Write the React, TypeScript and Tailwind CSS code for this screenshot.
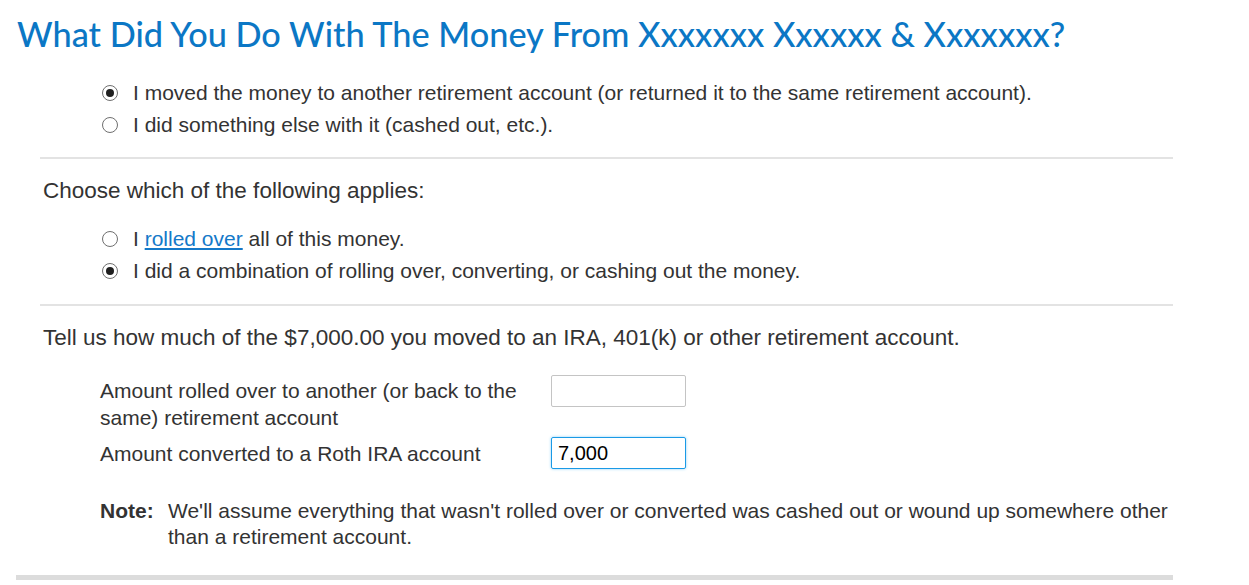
import React, { useState } from 'react';

const body = { fontFamily: '"Liberation Sans", Arial, sans-serif' };
const heading = { fontFamily: 'Lato, "Open Sans", sans-serif' };

const Radio: React.FC<{ checked: boolean; onClick: () => void; children: React.ReactNode }> = ({ checked, onClick, children }) => (
    <label className="flex items-center h-[32px] cursor-pointer" onClick={onClick}>
        <span className="w-[16px] h-[16px] rounded-full border-[1.5px] border-[#6f6f6f] bg-white flex items-center justify-center mr-[15px] shrink-0">
            {checked && <span className="w-[8px] h-[8px] rounded-full bg-[#1f1f1f]" />}
        </span>
        <span className="text-[21px] text-[#333]">{children}</span>
    </label>
);

const App: React.FC = () => {
    const [moved, setMoved] = useState(0);
    const [kind, setKind] = useState(1);
    const [rolled, setRolled] = useState('');
    const [converted, setConverted] = useState('7,000');

    return (
        <div className="bg-white min-h-[585px] pl-[16px] w-[1173px]" style={body}>
            <h1 className="text-[34.3px] font-medium text-[#0b77c5] pt-[14px] pl-[1px] leading-[40px] whitespace-nowrap" style={heading}>
                What Did You Do With The Money From Xxxxxxx Xxxxxx &amp; Xxxxxxx?
            </h1>

            <div className="pl-[86px] pt-[23px] pb-[16px]">
                <Radio checked={moved === 0} onClick={() => setMoved(0)}>
                    I moved the money to another retirement account (or returned it to the same retirement account).
                </Radio>
                <Radio checked={moved === 1} onClick={() => setMoved(1)}>
                    I did something else with it (cashed out, etc.).
                </Radio>
            </div>

            <div className="ml-[24px] border-t-2 border-[#e3e3e3]">
                <p className="text-[22.5px] text-[#333] pl-[3px] pt-[17px] leading-[30px]">Choose which of the following applies:</p>
                <div className="pl-[62px] pt-[17px] pb-[17px]">
                    <Radio checked={kind === 0} onClick={() => setKind(0)}>
                        I <a href="#" className="text-[#1479c9] underline">rolled over</a> all of this money.
                    </Radio>
                    <Radio checked={kind === 1} onClick={() => setKind(1)}>
                        I did a combination of rolling over, converting, or cashing out the money.
                    </Radio>
                </div>
            </div>

            <div className="ml-[24px] border-t-2 border-[#e3e3e3]">
                <p className="text-[22.5px] text-[#333] pl-[3px] pt-[17px] leading-[30px]">
                    Tell us how much of the $7,000.00 you moved to an IRA, 401(k) or other retirement account.
                </p>

                <div className="pl-[60px] pt-[22px] text-[21px] text-[#333]">
                    <div className="flex items-start">
                        <span className="w-[451px] leading-[27px] pr-[20px] pt-[2px]">
                            Amount rolled over to another (or back to the same) retirement account
                        </span>
                        <input
                            value={rolled}
                            onChange={e => setRolled(e.target.value)}
                            className="w-[135px] h-[32px] border border-[#c4c4c4] rounded-[2px] px-[6px] outline-none text-[20px] text-black"
                        />
                    </div>
                    <div className="flex items-center mt-[6px]">
                        <span className="w-[451px] leading-[27px]">Amount converted to a Roth IRA account</span>
                        <input
                            value={converted}
                            onChange={e => setConverted(e.target.value)}
                            className="w-[135px] h-[32px] border border-[#1a9ae6] rounded-[2px] px-[6px] outline-none text-[20px] text-black shadow-[0_0_3px_#8fd0f5]"
                        />
                    </div>

                    <div className="flex pt-[29px] leading-[26px]">
                        <span className="font-bold w-[68px] shrink-0">Note:</span>
                        <span>
                            We'll assume everything that wasn't rolled over or converted was cashed out or wound up somewhere other than a retirement account.
                        </span>
                    </div>
                </div>
            </div>

            <div className="mt-[25px] h-[5px] bg-[#dcdcdc]" />
        </div>
    );
};

export default App;
